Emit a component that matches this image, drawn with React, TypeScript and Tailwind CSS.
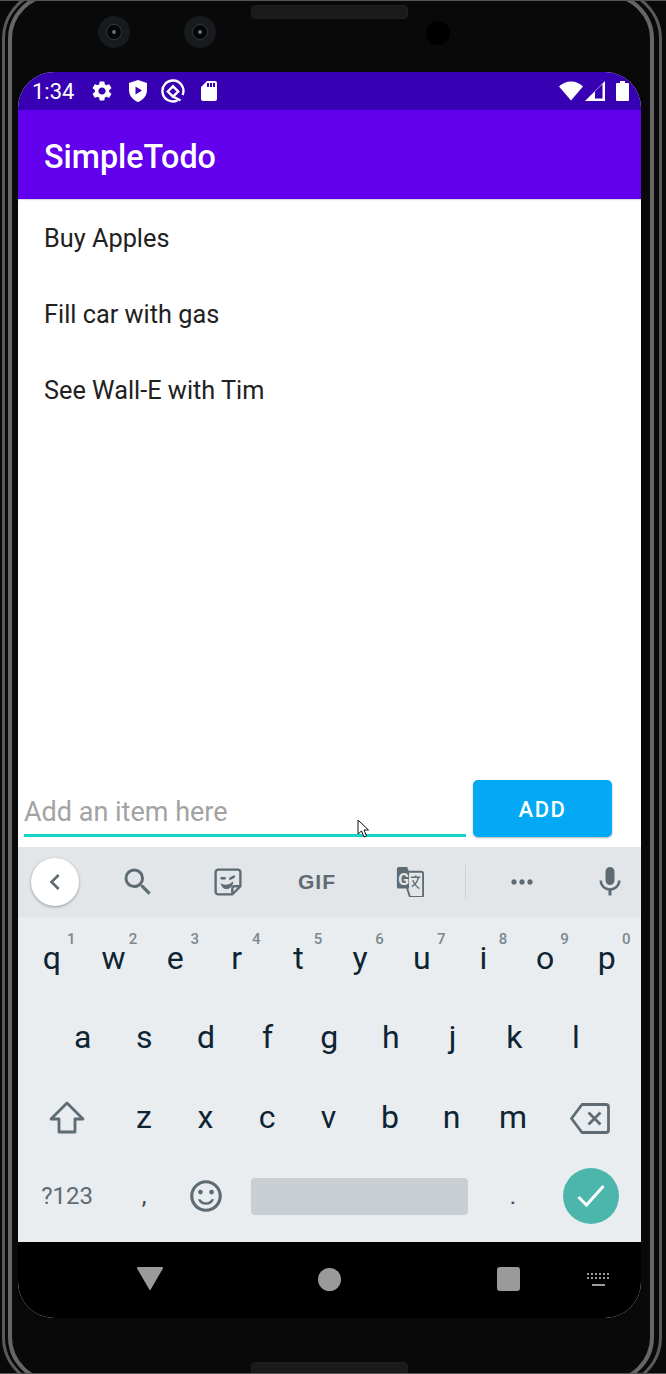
import React from "react";
import {
  MdSettings,
  MdSdStorage,
  MdSearch,
  MdMoreHoriz,
  MdMic,
  MdChevronLeft,
  MdOutlineSentimentSatisfiedAlt,
} from "react-icons/md";

const items = ["Buy Apples", "Fill car with gas", "See Wall-E with Tim"];

const row1 = [
  ["q", "1"],
  ["w", "2"],
  ["e", "3"],
  ["r", "4"],
  ["t", "5"],
  ["y", "6"],
  ["u", "7"],
  ["i", "8"],
  ["o", "9"],
  ["p", "0"],
];
const row2 = ["a", "s", "d", "f", "g", "h", "j", "k", "l"];
const row3 = ["z", "x", "c", "v", "b", "n", "m"];

const Camera = () => (
  <div className="w-8 h-8 rounded-full bg-[#171b1e] flex items-center justify-center">
    <div className="w-4 h-4 rounded-full bg-[#050505] border border-[#33383b] flex items-center justify-center">
      <div className="w-1 h-1 rounded-full bg-[#6b6f72]" />
    </div>
  </div>
);

const Speaker = () => (
  <div className="w-[157px] h-[14px] rounded-[4px] bg-[#1a1a1a] border border-[#202020]" />
);

const StatusBar = () => (
  <div className="h-[38px] bg-[#3700b3] flex items-center text-white">
    <span className="ml-[14px] pt-[2px] w-[42px] text-[22px] leading-none">1:34</span>
    <MdSettings className="ml-[16px] w-6 h-6" />
    {/* play protect shield */}
    <svg viewBox="0 0 18 22" className="ml-[15px] w-[18px] h-[22px]" fill="#fff">
      <path d="M9 0l9 3v7c0 5.500-3.700 10-9 12C3.700 20 0 15.500 0 10V3z" />
      <path d="M6.500 6.500l6.500 4-6.500 4z" fill="#3700b3" />
    </svg>
    {/* data saver ring */}
    <svg viewBox="0 0 24 24" className="ml-[14px] w-6 h-6" fill="none" stroke="#fff" strokeWidth="2.400">
      <path d="M16.500 21.400A10.500 10.500 0 1 1 21.600 16" />
      <path d="M6.800 12.500L12 7.300l5.200 5.200-5.200 5.200z" />
      <path d="M12 17.500l7.500 4" />
    </svg>
    <MdSdStorage className="ml-[12px] w-6 h-6" />
    <svg viewBox="0 0 24 20" className="ml-auto w-6 h-5" fill="#fff">
      <path d="M12 19.500L0 5.500C3 2.500 7 .5 12 .5s9 2 12 5z" />
    </svg>
    <svg viewBox="0 0 20 20" className="ml-[2px] w-5 h-5">
      <path d="M0 20L20 0v20z" fill="#fff" />
      <path d="M10 17.500V10.500l7.500-7.500v14.500z" fill="#3700b3" />
    </svg>
    <svg viewBox="0 0 13 20" className="ml-[11px] mr-[12px] w-[13px] h-5" fill="#fff">
      <path d="M4 0h5v2h3a1 1 0 0 1 1 1v16a1 1 0 0 1-1 1H1a1 1 0 0 1-1-1V3a1 1 0 0 1 1-1h3z" />
    </svg>
  </div>
);

const SuggestionStrip = () => (
  <div className="h-[70px] bg-[#e2e6e9] flex items-center text-[#5f6b73]">
    <div className="ml-[13px] w-12 h-12 rounded-full bg-white shadow-[0_1px_3px_rgba(0,0,0,0.35)] flex items-center justify-center">
      <MdChevronLeft className="w-8 h-8" />
    </div>
    <MdSearch className="ml-[41px] w-9 h-9 -mr-[4px]" />
    {/* sticker */}
    <svg viewBox="0 0 26 26" className="ml-[62px] w-[28px] h-[28px]" fill="none" stroke="currentColor" strokeWidth="2.200">
      <path d="M4 1.500h18A2.500 2.500 0 0 1 24.500 4v13L17 24.500H4A2.500 2.500 0 0 1 1.500 22V4A2.500 2.500 0 0 1 4 1.500z" />
      <path d="M24 17h-5a2 2 0 0 0-2 2v5" />
      <path d="M7 9.500h3M15 10l3.500-2" strokeLinecap="round" />
      <path d="M7 15c4 2 8 1 10.500-2-1 4-3 6-6 6-2.500 0-4-2-4.500-4z" fill="currentColor" strokeWidth="1" />
    </svg>
    <span className="ml-[56px] w-[38px] pb-[2px] text-center text-[21px] leading-none font-black tracking-[1px] font-['Liberation_Sans',sans-serif]">
      GIF
    </span>
    {/* translate */}
    <svg viewBox="0 0 28 32" className="ml-[60px] w-[28px] h-[30px]">
      <path d="M2 0h9l2 5v18H2a2 2 0 0 1-2-2V2a2 2 0 0 1 2-2z" fill="currentColor" />
      <path d="M11 5h15a2 2 0 0 1 2 2v23a2 2 0 0 1-2 2H14l-3-9z" fill="none" stroke="currentColor" strokeWidth="2" />
      <text x="1.500" y="19" fontSize="17" fontWeight="700" fill="#e2e6e9" fontFamily="Roboto, sans-serif">
        G
      </text>
      <path d="M15 11h10M20 9v2M23 11c-1 5-4 8-7 10M17 14c1 3 4 7 7 9" fill="none" stroke="currentColor" strokeWidth="1.500" />
    </svg>
    <div className="ml-[41px] w-px h-[34px] bg-[#cdd2d5]" />
    <MdMoreHoriz className="ml-[40px] w-8 h-8" />
    <MdMic className="ml-[54px] w-9 h-9" />
  </div>
);

const Letter = ({ label }: { label: string }) => (
  <div className="h-full flex items-center justify-center text-[32px] leading-none text-[#0e2433]">
    {label}
  </div>
);

const Keyboard = () => (
  <div className="h-[325px] bg-[#e9edf0] pl-[3px] pr-[3.5px] pt-[1px] pb-[6px] grid grid-rows-4 font-['Roboto',sans-serif]">
    <div className="grid grid-cols-10">
      {row1.map(([letter, digit]) => (
        <div key={letter} className="relative">
          <Letter label={letter} />
          <span className="absolute top-[14px] right-[7px] text-[15px] leading-none font-medium text-[#7d878e]">
            {digit}
          </span>
        </div>
      ))}
    </div>
    <div className="grid grid-cols-9 px-[30.75px]">
      {row2.map((letter) => (
        <Letter key={letter} label={letter} />
      ))}
    </div>
    <div className="grid grid-cols-[92.25px_repeat(7,61.5px)_92.25px]">
      <div className="flex items-center justify-center pt-[2px]">
        <svg viewBox="0 0 36 34" className="w-9 h-[34px]" fill="none" stroke="#5f6b73" strokeWidth="2.800" strokeLinejoin="round">
          <path d="M18 2L2 18h8v13h16V18h8z" />
        </svg>
      </div>
      {row3.map((letter) => (
        <Letter key={letter} label={letter} />
      ))}
      <div className="flex items-center justify-center pt-[3px]">
        <svg viewBox="0 0 40 31" className="w-10 h-[31px]" fill="none" stroke="#5f6b73" strokeWidth="2.800" strokeLinejoin="round">
          <path d="M12 1.500h24a2.500 2.500 0 0 1 2.500 2.500v23a2.500 2.500 0 0 1-2.500 2.500H12L1.500 15.500z" />
          <path d="M18.500 9.500l12 12M30.500 9.500l-12 12" />
        </svg>
      </div>
    </div>
    <div className="grid grid-cols-[92.25px_61.5px_61.5px_246px_61.5px_92.25px]">
      <div className="flex items-center justify-center text-[24px] text-[#5f6b73]">?123</div>
      <div className="flex items-center justify-center text-[24px] text-[#3c4850]">,</div>
      <div className="flex items-center justify-center">
        <MdOutlineSentimentSatisfiedAlt className="w-[38px] h-[38px] text-[#5f6b73]" />
      </div>
      <div className="flex items-center justify-center">
        <div className="w-[217px] h-[37px] rounded-[4px] bg-[#c9ced2]" />
      </div>
      <div className="flex items-center justify-center text-[24px] text-[#3c4850]">.</div>
      <div className="flex items-center justify-center pl-[2px]">
        <div className="w-14 h-14 rounded-full bg-[#4db6ac] flex items-center justify-center">
          <svg viewBox="0 0 28 24" className="w-7 h-6" fill="none" stroke="#fff" strokeWidth="3">
            <path d="M1.500 13l8 8L26.500 2" />
          </svg>
        </div>
      </div>
    </div>
  </div>
);

const NavBar = () => (
  <div className="h-[76px] bg-black flex items-start pt-[25px]">
    <svg viewBox="0 0 26 23" className="ml-[119px] w-[26px] h-[23px]" fill="#9a9a9a">
      <path d="M1 0h24a1 1 0 0 1 .9 1.500L14 22a1 1 0 0 1-2 0L.1 1.500A1 1 0 0 1 1 0z" />
    </svg>
    <div className="ml-[155px] mt-[1px] w-[23px] h-[23px] rounded-full bg-[#9a9a9a]" />
    <div className="ml-[156px] w-[23px] h-6 rounded-[3px] bg-[#9a9a9a]" />
    <svg viewBox="0 0 24 14" className="ml-[67px] mt-[6px] w-6 h-[14px]" fill="#9a9a9a">
      <path d="M0 0h2v2H0zM4 0h2v2H4zM8 0h2v2H8zM12 0h2v2h-2zM16 0h2v2h-2zM20 0h2v2h-2zM0 4h2v2H0zM4 4h2v2H4zM8 4h2v2H8zM12 4h2v2h-2zM16 4h2v2h-2zM20 4h2v2h-2zM5 11h13v2H5z" />
    </svg>
  </div>
);

export default function App() {
  return (
    <div className="relative w-[666px] h-[1374px] overflow-hidden bg-[#090909] border-y border-[#555] font-['Roboto',sans-serif]">
      {/* phone frame rings */}
      <div className="absolute left-[2px] -top-[12px] w-[660px] h-[1398px] rounded-[50px] border-[3px] border-[#5a5a5a]" />
      <div className="absolute left-[8px] -top-[8px] w-[646px] h-[1390px] rounded-[46px] border-[4px] border-[#666]" />

      <div className="relative h-[71px] flex items-start">
        <div className="ml-[98px] mt-[15px]">
          <Camera />
        </div>
        <div className="ml-[54px] mt-[15px]">
          <Camera />
        </div>
        <div className="ml-[35px] mt-[4px]">
          <Speaker />
        </div>
        <div className="ml-[18px] mt-[20px] w-6 h-6 rounded-full bg-black" />
      </div>

      <div className="relative ml-[18px] w-[623px] h-[1246px] rounded-[36px] overflow-hidden bg-white flex flex-col">
        <StatusBar />
        <div className="h-[89px] bg-[#6200ee] flex items-center pl-[26px] pt-[5px] shadow-[0_1px_1px_rgba(0,0,0,0.15)]">
          <span className="text-[32.3px] font-medium text-white">SimpleTodo</span>
        </div>
        <div className="flex-1">
          {items.map((item) => (
            <div key={item} className="h-[76px] flex items-center pl-[26px] pt-[4px] text-[25.3px] text-[#212121]">
              {item}
            </div>
          ))}
        </div>
        <div className="flex pb-[10px] pl-[6px]">
          <div className="w-[442px] h-[48px] mt-[9px] border-b-[3px] border-[#14d6c8] flex items-center pt-[2px] text-[27px] text-[#a3a3a3]">
            Add an item here
          </div>
          <div className="ml-[7px] w-[139px] h-[57px] rounded-[5px] bg-[#03a9f4] shadow-[0_1px_2px_rgba(0,0,0,0.3)] flex items-center justify-center pt-[2px] text-[22px] font-medium tracking-[1.500px] text-white">
            ADD
          </div>
        </div>
        <SuggestionStrip />
        <Keyboard />
        <NavBar />
      </div>

      <div className="relative ml-[251px] mt-[44px]">
        <Speaker />
      </div>

      <svg viewBox="0 0 12 20" className="absolute left-[357px] top-[818px] w-3 h-5" fill="#fff" stroke="#111" strokeWidth="1">
        <path d="M1 1v14l3.500-3 2.500 6 2.500-1-2.500-6h4.500z" />
      </svg>
    </div>
  );
}
